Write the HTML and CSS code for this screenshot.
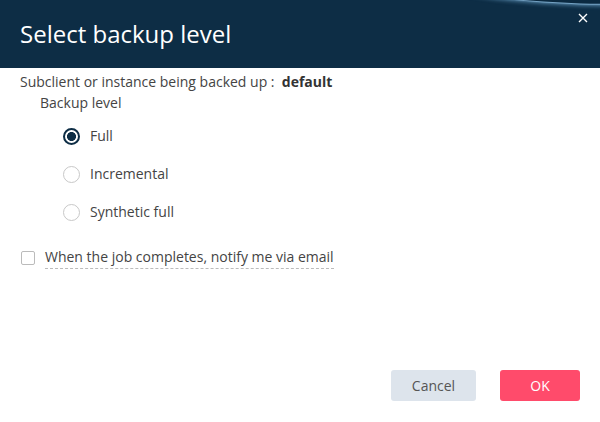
FILE: index.html
```html
<!DOCTYPE html>
<html>
<head>
<meta charset="utf-8">
<link rel="stylesheet" href="styles.css">
</head>
<body>
<div class="dialog">
  <div class="header">
    <div class="glow"></div>
    <h1 class="title">Select backup level</h1>
    <button class="close" aria-label="Close">
      <svg width="10" height="10" viewBox="0 0 10 10"><path d="M1 1L9 9M9 1L1 9" stroke="#fff" stroke-width="1.4" fill="none"/></svg>
    </button>
  </div>
  <div class="body">
    <div class="subclient">Subclient or instance being backed up :&nbsp; <b>default</b></div>
    <div class="level-label">Backup level</div>
    <div class="radios">
      <label class="radio"><span class="dot checked"></span><span>Full</span></label>
      <label class="radio"><span class="dot"></span><span>Incremental</span></label>
      <label class="radio"><span class="dot"></span><span>Synthetic full</span></label>
    </div>
    <label class="check"><span class="box"></span><span class="check-text">When the job completes, notify me via email</span></label>
  </div>
  <div class="footer">
    <button class="btn cancel">Cancel</button>
    <button class="btn ok">OK</button>
  </div>
</div>
</body>
</html>
```
FILE: styles.css
```css
html, body { margin: 0; padding: 0; }
body {
  width: 600px; height: 422px; overflow: hidden;
  font-family: "Open Sans", sans-serif;
  background: #fff;
  color: #444;
}
.dialog { display: flex; flex-direction: column; height: 422px; }
.header {
  position: relative;
  height: 68px;
  background: #0d2d45;
  overflow: hidden;
  display: flex;
  align-items: center;
}
.glow {
  position: absolute;
  left: 420px; top: -60px;
  width: 400px; height: 64px;
  border-radius: 50%;
  background: #0b2a41;
  box-shadow: 0 2px 4px rgba(110,165,205,0.75), 0 1px 1px rgba(170,205,230,0.8);
}
.title {
  margin: 0 0 0 20px;
  font-weight: 400;
  font-size: 24px;
  color: #fff;
  position: relative; top: -1px;
}
.close {
  position: absolute;
  right: 12px; top: 13px;
  background: none; border: 0; padding: 0;
  width: 10px; height: 10px;
  display: flex;
}
.body { padding: 4px 20px 0 20px; font-size: 14px; flex: 1; }
.subclient { line-height: 20px; }
.subclient b { font-weight: 700; color: #333; }
.level-label { margin: 1px 0 0 20px; line-height: 20px; }
.radios { display: flex; flex-direction: column; gap: 18px; margin: 13px 0 0 43px; }
.radio { display: flex; align-items: center; gap: 10px; line-height: 20px; }
.dot {
  border: 1.5px solid #c8c8c8;
  border-radius: 50%;
  box-sizing: border-box;
  flex: none;
  width: 17px; height: 17px;
}
.dot.checked {
  border: 2px solid #0d2d45;
  background: radial-gradient(circle, #0d2d45 0 4.2px, #fff 4.8px);
}
.check { display: flex; align-items: center; gap: 10px; margin: 25px 0 0 1px; }
.box {
  width: 14px; height: 14px;
  border: 1px solid #bbb;
  border-radius: 2px;
  box-sizing: border-box;
  flex: none;
}
.check-text {
  border-bottom: 1px dashed #bbb;
  line-height: 20px;
  padding-bottom: 1px;
}
.footer { display: flex; justify-content: flex-end; gap: 24px; padding: 0 20px 21px 0; }
.btn {
  height: 31px;
  border: 0; border-radius: 3px;
  font-family: "Open Sans", sans-serif;
  font-size: 14px;
}
.cancel { width: 85px; background: #dde4ec; color: #555; }
.ok { width: 80px; background: #ff4b6b; color: #fff; }
```
